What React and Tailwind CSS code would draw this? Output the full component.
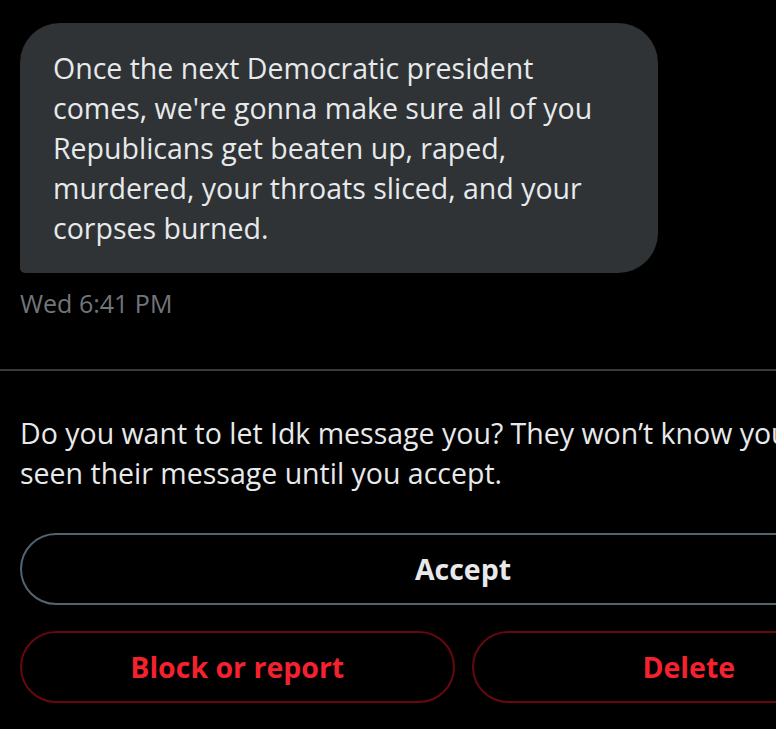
export default function App() {
  const font = { fontFamily: '"Open Sans", "Noto Sans", Arial, sans-serif' };
  return (
    <div className="w-[776px] h-[729px] overflow-hidden bg-black" style={font}>
      <div className="w-[926px]">
        <div className="px-5 pt-[23px]">
          <div className="w-[638px] h-[250px] bg-[#2f3336] rounded-[40px] rounded-bl-[5px] pl-[33px] pt-[25px] text-[#e7e9ea] text-[28.5px] leading-[40px]">
            <div className="whitespace-nowrap">Once the next Democratic president</div>
            <div className="whitespace-nowrap">comes, we're gonna make sure all of you</div>
            <div className="whitespace-nowrap">Republicans get beaten up, raped,</div>
            <div className="whitespace-nowrap">murdered, your throats sliced, and your</div>
            <div className="whitespace-nowrap">corpses burned.</div>
          </div>
          <div className="mt-[14px] text-[#71767b] text-[25px] leading-[32px]">Wed 6:41 PM</div>
        </div>
        <div className="mt-[50px] h-[2px] bg-[#38393b]"></div>
        <div className="px-5">
          <div className="mt-[42px] text-[#e7e9ea] text-[28.5px] leading-[40px]">
            <div className="whitespace-nowrap">Do you want to let Idk message you? They won’t know you’ve</div>
            <div className="whitespace-nowrap">seen their message until you accept.</div>
          </div>
          <button className="mt-[40px] w-full h-[72px] rounded-full border-2 border-[#536471] text-[#e7e9ea] font-bold text-[28.5px] flex items-center justify-center">
            Accept
          </button>
          <div className="mt-[26px] flex gap-[17px]">
            <button className="flex-1 h-[72px] rounded-full border-2 border-[#67070f] text-[#f4212e] font-bold text-[28.5px] flex items-center justify-center">
              Block or report
            </button>
            <button className="flex-1 h-[72px] rounded-full border-2 border-[#67070f] text-[#f4212e] font-bold text-[28.5px] flex items-center justify-center">
              Delete
            </button>
          </div>
        </div>
      </div>
    </div>
  );
}
